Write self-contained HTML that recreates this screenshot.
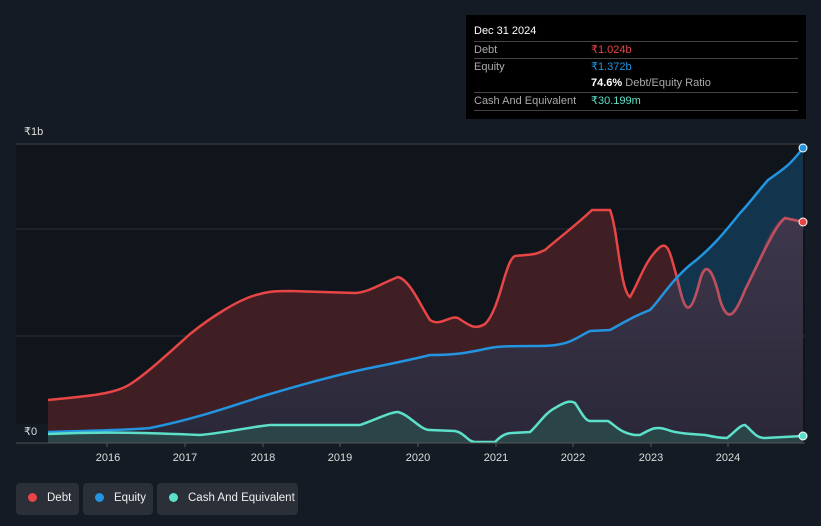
<!DOCTYPE html>
<html><head><style>
body{margin:0;width:821px;height:526px;background:#151b24;font-family:"Liberation Sans",sans-serif;overflow:hidden;position:relative}
.tt{position:absolute;left:466px;top:15px;width:340px;height:104px;background:#000;color:#fff;font-size:11px}
.tt .r{position:absolute;left:8px;width:324px;border-top:1px solid #444;height:17px;line-height:17px;color:#aaa}
.tt .v{position:absolute;left:117px}
.leg{position:absolute;top:483px;height:32px;background:#2a2f38;border-radius:4px;color:#eee;font-size:11.5px;line-height:30px;white-space:nowrap}
.dot{display:inline-block;width:9px;height:9px;border-radius:50%;margin:0 10px 0 12px;vertical-align:-1px}
</style></head><body>
<svg width="821" height="526" style="position:absolute;left:0;top:0">
<defs>
<linearGradient id="eq" x1="0" y1="0" x2="0" y2="1"><stop offset="0" stop-color="#453c52"/><stop offset="1" stop-color="#2a2838"/></linearGradient>
<clipPath id="eqc"><path d="M803,148 C790,165 785,168 768,180 C755,195 748,205 740,213 C725,232 710,250 695,262 C680,275 670,282 660,300 C650,310 640,312 630,318 C620,322 615,330 600,331 L590,331 C575,338 570,346 540,346 C515,346 500,346 490,348 C470,352 460,355 430,355 C410,360 400,362 370,368 C340,374 300,385 260,397 C220,410 190,420 150,428 C130,430 90,431 48,432 L48,443 L803,443 Z"/></clipPath>
</defs>
<rect x="16" y="144" width="789" height="299" fill="#10141b"/>
<line x1="16" y1="144" x2="805" y2="144" stroke="#444" />
<line x1="16" y1="229" x2="805" y2="229" stroke="#2a2e35"/>
<line x1="16" y1="336" x2="805" y2="336" stroke="#2a2e35"/>
<path d="M48,400 C90,396 110,394 125,387 C140,380 170,352 190,334 C210,318 240,298 260,294 C270,291 280,291 290,291 L355,293 C370,292 380,284 398,277 C410,280 420,305 430,320 C440,327 450,315 458,318 C470,326 475,330 485,324 C500,310 505,260 515,256 C540,254 535,254 545,250 C560,237 575,226 592,210 L610,210 C618,230 620,290 630,297 C640,280 645,260 660,247 C668,242 670,250 680,290 C685,310 690,320 700,280 C705,262 712,265 720,300 C728,325 735,315 745,290 C760,260 775,225 785,218 L803,222 L803,443 L48,443 Z" fill="#3f1f24"/>
<path d="M803,148 C790,165 785,168 768,180 C755,195 748,205 740,213 C725,232 710,250 695,262 C680,275 670,282 660,300 C650,310 640,312 630,318 C620,322 615,330 600,331 L590,331 C575,338 570,346 540,346 C515,346 500,346 490,348 C470,352 460,355 430,355 C410,360 400,362 370,368 C340,374 300,385 260,397 C220,410 190,420 150,428 C130,430 90,431 48,432 L48,443 L803,443 Z" fill="url(#eq)"/>
<path d="M803,148 C790,165 785,168 768,180 C755,195 748,205 740,213 C725,232 710,250 695,262 C685,270 682,270 680,275 L680,290 C685,310 690,320 700,280 C705,262 712,265 720,300 C728,325 735,315 745,290 C760,260 770,220 785,218 L803,222 Z" fill="#12344d"/>
<path d="M48,400 C90,396 110,394 125,387 C140,380 170,352 190,334 C210,318 240,298 260,294 C270,291 280,291 290,291 L355,293 C370,292 380,284 398,277 C410,280 420,305 430,320 C440,327 450,315 458,318 C470,326 475,330 485,324 C500,310 505,260 515,256 C540,254 535,254 545,250 C560,237 575,226 592,210 L610,210 C618,230 620,290 630,297 C640,280 645,260 660,247 C668,242 670,250 680,290 C685,310 690,320 700,280 C705,262 712,265 720,300 C728,325 735,315 745,290 C760,260 775,225 785,218 L803,222" fill="none" stroke="#e84646" stroke-width="2.5"/>
<g clip-path="url(#eqc)"><path d="M48,400 C90,396 110,394 125,387 C140,380 170,352 190,334 C210,318 240,298 260,294 C270,291 280,291 290,291 L355,293 C370,292 380,284 398,277 C410,280 420,305 430,320 C440,327 450,315 458,318 C470,326 475,330 485,324 C500,310 505,260 515,256 C540,254 535,254 545,250 C560,237 575,226 592,210 L610,210 C618,230 620,290 630,297 C640,280 645,260 660,247 C668,242 670,250 680,290 C685,310 690,320 700,280 C705,262 712,265 720,300 C728,325 735,315 745,290 C760,260 775,225 785,218 L803,222" fill="none" stroke="#b94f5f" stroke-width="2.6"/></g>
<path d="M48,432 C90,431 130,430 150,428 C190,420 220,410 260,397 C300,385 340,374 370,368 C400,362 410,360 430,355 C460,355 470,352 490,348 C500,346 515,346 540,346 C570,346 575,338 590,331 L610,330 C625,322 630,318 650,310 C660,300 670,282 690,265 C710,250 725,232 740,213 C748,205 755,195 768,180 C785,168 790,165 803,148" fill="none" stroke="#2394df" stroke-width="2.5"/>
<path d="M48,434 C90,432 130,432 200,435 C230,432 250,427 270,425 L360,425 C375,420 390,412 398,412 C410,415 420,430 430,430 L455,431 C465,433 468,442 475,442 L495,442 C500,437 505,433 512,433 L530,432 C538,425 545,413 555,408 C565,402 570,400 575,403 C580,410 585,421 590,421 L608,421 C615,425 620,433 635,435 L640,435 C650,430 655,425 668,430 C675,433 690,434 705,435 C715,437 720,438 727,438 C735,432 740,425 745,425 C752,430 755,438 765,438 L803,436 L803,443 L48,443 Z" fill="#2a4b4b" opacity="0.8"/>
<path d="M48,434 C90,432 130,432 200,435 C230,432 250,427 270,425 L360,425 C375,420 390,412 398,412 C410,415 420,430 430,430 L455,431 C465,433 468,442 475,442 L495,442 C500,437 505,433 512,433 L530,432 C538,425 545,413 555,408 C565,402 570,400 575,403 C580,410 585,421 590,421 L608,421 C615,425 620,433 635,435 L640,435 C650,430 655,425 668,430 C675,433 690,434 705,435 C715,437 720,438 727,438 C735,432 740,425 745,425 C752,430 755,438 765,438 L803,436" fill="none" stroke="#5de0c9" stroke-width="2.5"/>
<line x1="16" y1="443" x2="805" y2="443" stroke="#555"/>
<g stroke="#555"><line x1="107" y1="443" x2="107" y2="447"/><line x1="185" y1="443" x2="185" y2="447"/><line x1="263" y1="443" x2="263" y2="447"/><line x1="340" y1="443" x2="340" y2="447"/><line x1="418" y1="443" x2="418" y2="447"/><line x1="496" y1="443" x2="496" y2="447"/><line x1="573" y1="443" x2="573" y2="447"/><line x1="651" y1="443" x2="651" y2="447"/><line x1="728" y1="443" x2="728" y2="447"/></g>
<circle cx="803" cy="148" r="4" fill="#2394df" stroke="#fff" stroke-width="1"/>
<circle cx="803" cy="222" r="4" fill="#e84646" stroke="#fff" stroke-width="1"/>
<circle cx="803" cy="436" r="4" fill="#5de0c9" stroke="#fff" stroke-width="1"/>
<rect x="16" y="424" width="32" height="18" fill="#151b24"/>
<g fill="#ddd" font-size="11" font-family="Liberation Sans,sans-serif" text-anchor="middle">
<text x="108" y="461">2016</text><text x="185" y="461">2017</text><text x="263" y="461">2018</text><text x="340" y="461">2019</text><text x="418" y="461">2020</text><text x="496" y="461">2021</text><text x="573" y="461">2022</text><text x="651" y="461">2023</text><text x="728" y="461">2024</text>
</g>
<text x="24" y="135" fill="#ddd" font-size="11" font-family="Liberation Sans,sans-serif">₹1b</text>
<text x="24" y="435" fill="#ddd" font-size="11" font-family="Liberation Sans,sans-serif">₹0</text>
</svg>
<div class="tt">
<div style="position:absolute;left:8px;top:10px;font-size:11px">Dec 31 2024</div>
<div class="r" style="top:26px">Debt<span class="v" style="color:#e84646">₹1.024b</span></div>
<div class="r" style="top:43px">Equity<span class="v" style="color:#2394df">₹1.372b</span></div>
<div class="r" style="top:60px;border-top:none"><span class="v" style="color:#aaa"><b style="color:#fff">74.6%</b> Debt/Equity Ratio</span></div>
<div class="r" style="top:77px">Cash And Equivalent<span class="v" style="color:#5de0c9">₹30.199m</span></div>
<div class="r" style="top:95px;height:0"></div>
</div>
<div class="leg" style="left:16px;width:63px"><span class="dot" style="background:#e84646"></span>Debt</div>
<div class="leg" style="left:83px;width:70px"><span class="dot" style="background:#2394df"></span>Equity</div>
<div class="leg" style="left:157px;width:141px"><span class="dot" style="background:#5de0c9"></span>Cash And Equivalent</div>
</body></html>
